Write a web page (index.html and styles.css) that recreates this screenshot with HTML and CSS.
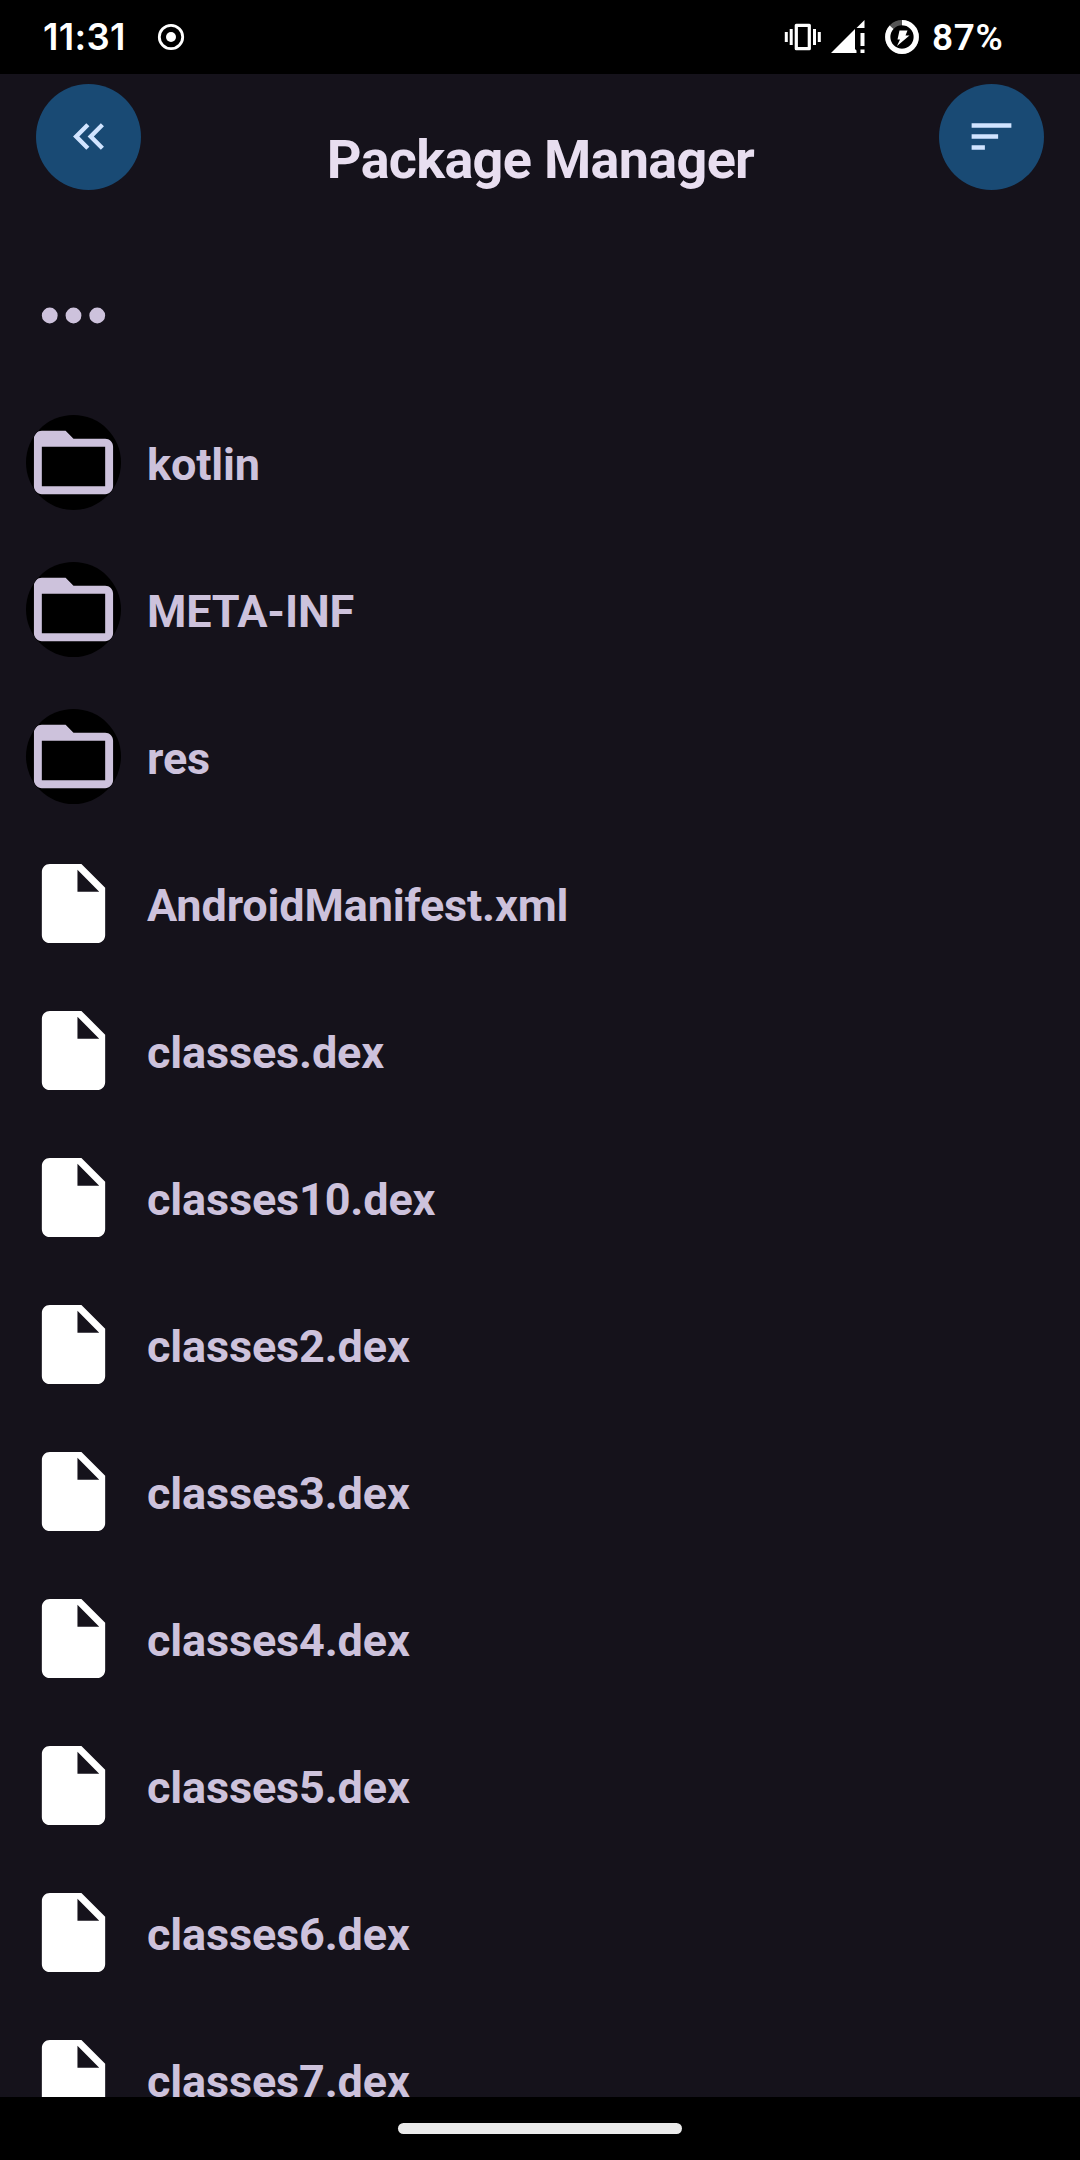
FILE: index.html
```html
<!DOCTYPE html>
<html lang="en">
<head>
<meta charset="utf-8">
<title>Package Manager</title>
<link rel="stylesheet" href="styles.css">
</head>
<body>
<svg class="sprite" aria-hidden="true">
  <symbol id="folder" viewBox="0 0 24 24"><path d="M20 6h-8l-2-2H4C2.9 4 2.01 4.9 2.01 6L2 18c0 1.1.9 2 2 2h16c1.1 0 2-.9 2-2V8c0-1.1-.9-2-2-2zm0 12H4V8h16v10z"/></symbol>
  <symbol id="file" viewBox="0 0 24 24"><path d="M6 2c-1.1 0-1.99.9-1.99 2L4 20c0 1.1.89 2 1.99 2H18c1.1 0 2-.9 2-2V8l-6-6H6zm7 7V3.5L18.5 9H13z"/></symbol>
</svg>
<div class="screen">
  <div class="status">
    <span class="clock">11:31</span>
    <svg class="record" viewBox="0 0 28 28"><circle cx="14" cy="14" r="11.7" fill="none" stroke="#fff" stroke-width="2.8"/><circle cx="14" cy="14" r="5" fill="#fff"/></svg>
    <div class="indicators">
      <svg class="vibrate" viewBox="0 0 38 28"><path fill="none" stroke="#fff" stroke-width="3.2" stroke-linejoin="round" d="M12.300 2.300h13v23.400h-13z"/><path fill="#fff" d="M.8 9h3v10h-3zM5.700 6h3v16h-3zM29 6h3v16h-3zM33.800 9h3v10h-3z"/></svg>
      <svg class="signal" viewBox="0 0 34 34"><path fill="#fff" d="M0 33 24 9v20l1.500 1.500V33zM25.500 8 33.500 0v8zM29.500 13h4v13h-4zM29.500 29.500h4V33h-4z"/></svg>
      <svg class="battery" viewBox="0 0 34 34"><circle cx="17" cy="17" r="14.300" fill="none" stroke="#555" stroke-width="5.200"/><circle cx="17" cy="17" r="14.300" fill="none" stroke="#fff" stroke-width="5.200" pathLength="100" stroke-dasharray="87 13" transform="rotate(-90 17 17)"/><path fill="#fff" d="M14.500 10.500h8L20.500 15.500h4L12 26l3-6.500h-2.500z"/></svg>
      <span class="percent">87%</span>
    </div>
  </div>
  <header class="toolbar">
    <button class="round" aria-label="Back"><svg viewBox="0 0 24 24"><path d="M17.590 18 19 16.590 14.420 12 19 7.410 17.590 6l-6 6zM11 18l1.410-1.410L7.830 12l4.580-4.590L11 6l-6 6z"/></svg></button>
    <h1>Package Manager</h1>
    <button class="round" aria-label="Sort"><svg viewBox="0 0 24 24"><path d="M3 18h6v-2H3zM3 6v2h18V6zM3 13h12v-2H3z"/></svg></button>
  </header>
  <ul class="list">
    <li><svg class="icon" viewBox="0 0 24 24"><path d="M6 10a2 2 0 1 0 0 4 2 2 0 0 0 0-4zm12 0a2 2 0 1 0 0 4 2 2 0 0 0 0-4zm-6 0a2 2 0 1 0 0 4 2 2 0 0 0 0-4z"/></svg></li>
    <li><svg class="icon folder"><use href="#folder"/></svg><span>kotlin</span></li>
    <li><svg class="icon folder"><use href="#folder"/></svg><span>META-INF</span></li>
    <li><svg class="icon folder"><use href="#folder"/></svg><span>res</span></li>
    <li><svg class="icon file"><use href="#file"/></svg><span>AndroidManifest.xml</span></li>
    <li><svg class="icon file"><use href="#file"/></svg><span>classes.dex</span></li>
    <li><svg class="icon file"><use href="#file"/></svg><span>classes10.dex</span></li>
    <li><svg class="icon file"><use href="#file"/></svg><span>classes2.dex</span></li>
    <li><svg class="icon file"><use href="#file"/></svg><span>classes3.dex</span></li>
    <li><svg class="icon file"><use href="#file"/></svg><span>classes4.dex</span></li>
    <li><svg class="icon file"><use href="#file"/></svg><span>classes5.dex</span></li>
    <li><svg class="icon file"><use href="#file"/></svg><span>classes6.dex</span></li>
    <li><svg class="icon file"><use href="#file"/></svg><span>classes7.dex</span></li>
  </ul>
  <div class="navbar"><div class="handle"></div></div>
</div>
</body>
</html>
```
FILE: styles.css
```css
* { box-sizing: border-box; }
body { margin: 0; background: #15121b; font-family: Roboto, sans-serif; }
.sprite { display: none; }
.screen { width: 1080px; height: 2160px; display: flex; flex-direction: column; overflow: hidden; }
.status { flex: none; height: 74px; background: #000; color: #fff; display: flex; align-items: center; padding: 0 75px 0 43px; font-weight: 600; font-size: 37px; }
.clock { width: 114px; font-family: Inter, sans-serif; font-size: 36.5px; letter-spacing: 0.3px; }
.record { width: 28px; height: 28px; }
.indicators { margin-left: auto; display: flex; align-items: center; }
.vibrate { width: 38px; height: 28px; margin-right: 9px; }
.signal { width: 34px; height: 34px; margin-right: 20px; }
.battery { width: 34px; height: 34px; margin-right: 13px; }
.percent { width: 73px; letter-spacing: 0.6px; }
.toolbar { flex: none; height: 168px; display: flex; justify-content: space-between; align-items: flex-start; padding: 10px 36px 0; }
.round { width: 105px; height: 106px; border: 0; border-radius: 50%; padding: 0; background: #194a74; display: flex; align-items: center; justify-content: center; }
.round svg { width: 53px; height: 53px; margin-bottom: 1px; fill: #d1e4ff; }
h1 { margin: 44px 0 0 1px; font-size: 54px; line-height: 64px; font-weight: 700; letter-spacing: -0.7px; color: #e8def0; }
.list { flex: 1; min-height: 0; overflow: hidden; margin: 0; padding: 0; list-style: none; color: #cdc2dc; }
.list li { height: 147px; display: flex; align-items: center; gap: 26px; padding-left: 26px; font-size: 45px; line-height: 54px; font-weight: 700; letter-spacing: -0.15px; }
.list span { padding-top: 5px; }
.icon { flex: none; width: 95px; height: 95px; fill: currentColor; }
.folder { background: #000; border-radius: 50%; }
.file { fill: #fff; }
.navbar { flex: none; height: 63px; background: #000; display: flex; justify-content: center; padding-top: 26px; }
.handle { width: 284px; height: 11px; border-radius: 6px; background: #ebebeb; }
```
